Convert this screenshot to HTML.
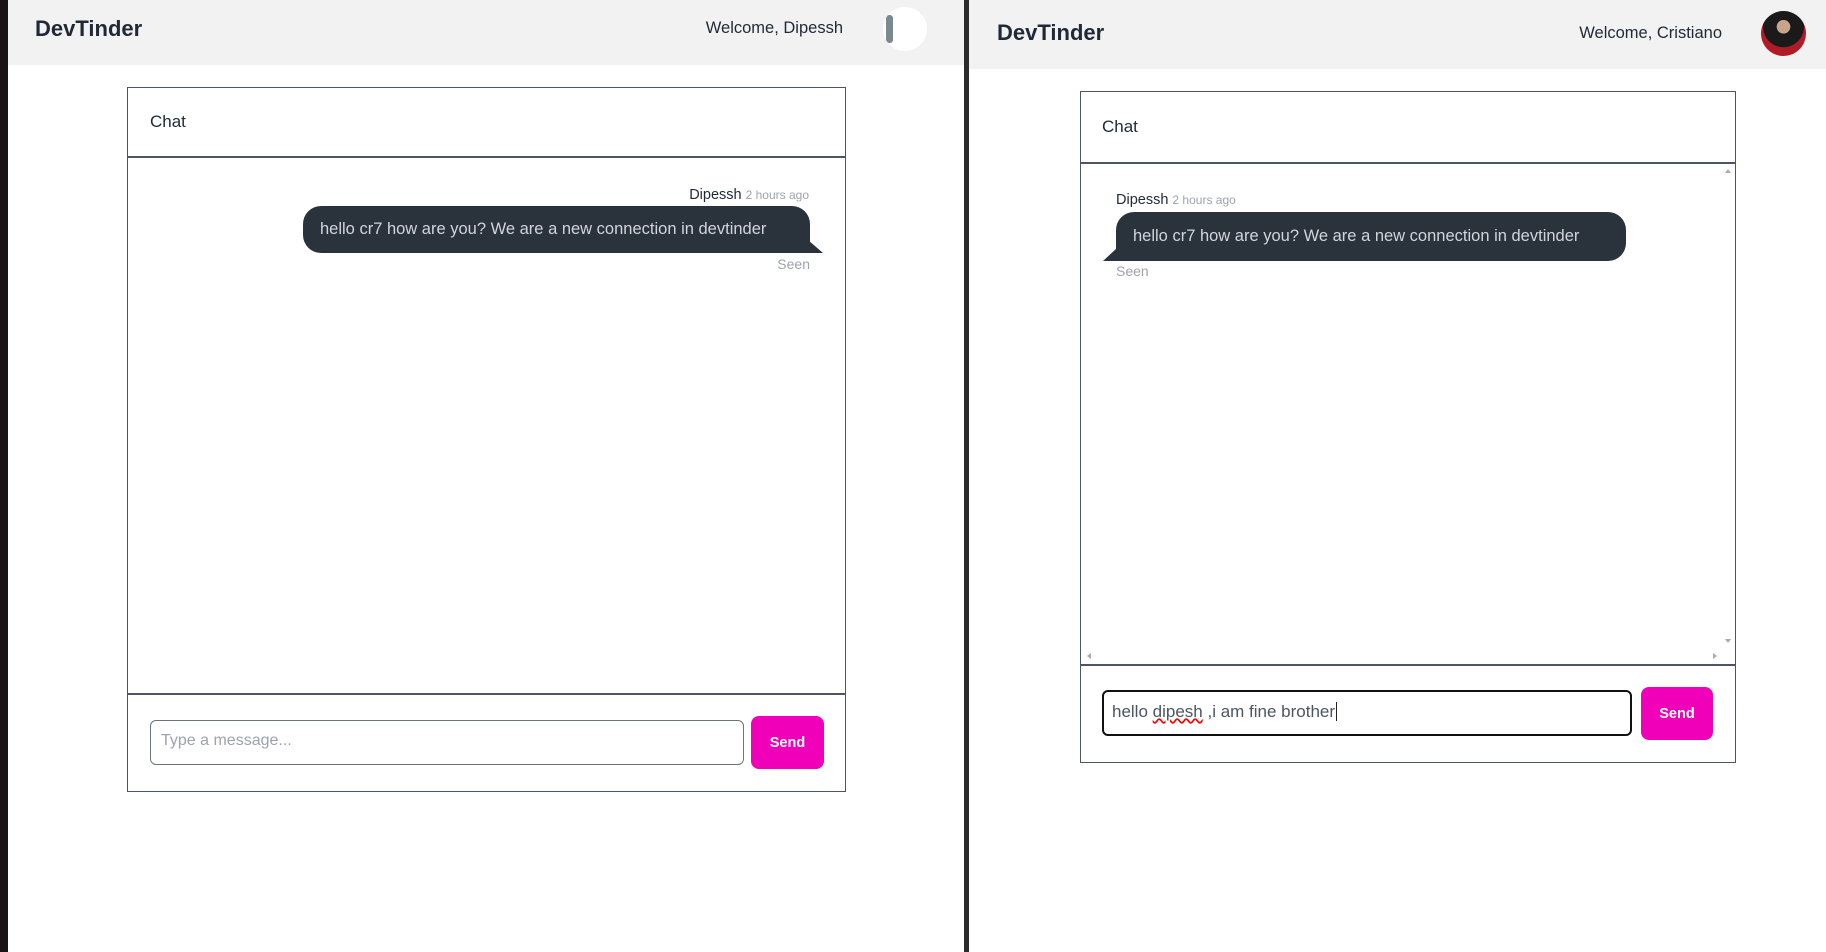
<!DOCTYPE html>
<html><head><meta charset="utf-8"><style>
*{margin:0;padding:0;box-sizing:border-box}
body{width:1826px;height:952px;position:relative;overflow:hidden;background:#fff;font-family:"Liberation Sans",sans-serif;color:#1f2937}
.a{position:absolute}
.hdr{background:#f2f2f2}
.logo{font-size:22px;font-weight:bold;color:#1f2937}
.wel{font-size:16.5px;color:#1f2937;white-space:nowrap}
.card{border:1.5px solid #4b5563}
.line{height:1.5px;background:#4b5563}
.chat{font-size:17px}
.bub{background:#2a323c;color:#d1d5db;border-radius:18px;font-size:16.5px;line-height:47px;padding:0 17px;white-space:nowrap}
.meta{font-size:14.5px;white-space:nowrap}
.meta span{font-size:12px;color:#9ca3af}
.seen{font-size:14px;color:#9ca3af}
.btn{background:#f000b8;color:#fff;font-weight:bold;font-size:14.5px;border-radius:8px;display:flex;align-items:center;justify-content:center}
</style></head><body>
<div class="a" style="left:0;top:0;width:8px;height:952px;background:#1a1214"></div>
<div class="a" style="left:964px;top:0;width:5px;height:952px;background:#2b2b2b"></div>

<!-- left -->
<div class="a hdr" style="left:8px;top:0;width:956px;height:65px"></div>
<div class="a logo" style="left:35px;top:16px">DevTinder</div>
<div class="a wel" style="right:983px;top:19px">Welcome, Dipessh</div>
<div class="a" style="left:883px;top:7px;width:44px;height:44px;border-radius:50%;background:#fff;overflow:hidden"><div style="position:absolute;left:3px;top:8px;width:7px;height:28px;background:#7c8a90;border-radius:3px"></div></div>
<div class="a card" style="left:127px;top:87px;width:719px;height:705px"></div>
<div class="a line" style="left:127px;top:156px;width:719px"></div>
<div class="a chat" style="left:150px;top:112px">Chat</div>
<div class="a meta" style="right:1017px;top:187px">Dipessh <span>2 hours ago</span></div>
<div class="a bub" style="left:303px;top:206px;width:507px;height:47px;border-bottom-right-radius:0">hello cr7 how are you? We are a new connection in devtinder</div>
<div class="a" style="left:808px;top:240px;width:15px;height:13px;background:#2a323c;clip-path:polygon(0 0,100% 100%,0 100%)"></div>
<div class="a seen" style="right:1016px;top:256px">Seen</div>
<div class="a line" style="left:127px;top:693px;width:719px"></div>
<div class="a" style="left:150px;top:720px;width:594px;height:45px;border:1px solid #6b7280;border-radius:6px;font-size:16px;color:#9ca3af;padding:11px 10px">Type a message...</div>
<div class="a btn" style="left:751px;top:716px;width:73px;height:53px">Send</div>

<!-- right -->
<div class="a hdr" style="left:969px;top:0;width:857px;height:69px"></div>
<div class="a logo" style="left:997px;top:20px">DevTinder</div>
<div class="a wel" style="right:104px;top:24px">Welcome, Cristiano</div>
<div class="a" style="left:1761px;top:11px;width:45px;height:45px;border-radius:50%;background:radial-gradient(circle at 50% 35%,#c9a38a 0 18%,#1a1a1a 19% 55%,#b01c25 56%);overflow:hidden"></div>
<div class="a card" style="left:1080px;top:91px;width:656px;height:672px"></div>
<div class="a line" style="left:1080px;top:162px;width:656px"></div>
<div class="a chat" style="left:1102px;top:117px">Chat</div>
<div class="a" style="left:1725px;top:169px;width:0;height:0;border-left:3px solid transparent;border-right:3px solid transparent;border-bottom:4px solid #aaa"></div>
<div class="a" style="left:1725px;top:639px;width:0;height:0;border-left:3px solid transparent;border-right:3px solid transparent;border-top:4px solid #aaa"></div>
<div class="a" style="left:1087px;top:653px;width:0;height:0;border-top:3px solid transparent;border-bottom:3px solid transparent;border-right:4px solid #aaa"></div>
<div class="a" style="left:1713px;top:653px;width:0;height:0;border-top:3px solid transparent;border-bottom:3px solid transparent;border-left:4px solid #aaa"></div>
<div class="a meta" style="left:1116px;top:192px">Dipessh <span>2 hours ago</span></div>
<div class="a bub" style="left:1116px;top:212px;width:510px;height:49px;line-height:49px;border-bottom-left-radius:0">hello cr7 how are you? We are a new connection in devtinder</div>
<div class="a" style="left:1103px;top:248px;width:14px;height:13px;background:#2a323c;clip-path:polygon(100% 0,100% 100%,0 100%)"></div>
<div class="a seen" style="left:1116px;top:263px">Seen</div>
<div class="a line" style="left:1080px;top:664px;width:656px"></div>
<div class="a" style="left:1102px;top:690px;width:530px;height:46px;border:2px solid #111;border-radius:6px;font-size:17px;color:#4b5563;padding:10px 8px;white-space:nowrap">hello <span style="text-decoration:underline wavy red">dipesh</span> ,i am fine brother<span style="border-left:1px solid #222;margin-left:1px"></span></div>
<div class="a btn" style="left:1641px;top:687px;width:72px;height:53px">Send</div>
</body></html>
